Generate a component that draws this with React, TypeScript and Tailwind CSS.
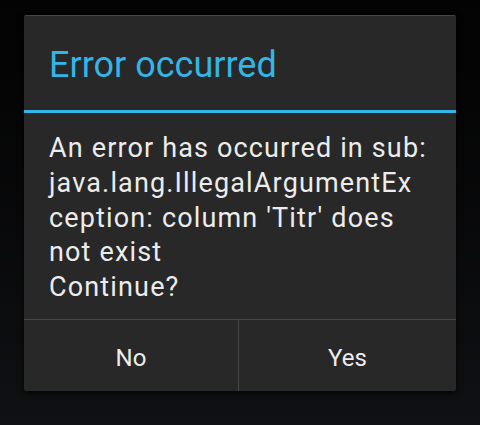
export default function App() {
    const lines = [
        "An error has occurred in sub:",
        "java.lang.IllegalArgumentEx",
        "ception: column 'Titr' does",
        "not exist",
        "Continue?",
    ];

    return (
        <div className="w-[480px] h-[425px] bg-gradient-to-b from-[#030303] to-[#101114] pt-[15px] px-[24px] font-['Roboto',sans-serif]">
            {/* Dialog */}
            <div className="w-[432px] bg-[#282828] rounded-[2px] border-t border-[#454545] shadow-[0_2px_6px_rgba(0,0,0,0.8)]">
                {/* Title */}
                <div className="pl-[25px] pt-[31px] pb-[27px] text-[36px] leading-[36px] text-[#33b5e5]">
                    Error occurred
                </div>
                <div className="h-[3px] bg-[#33b5e5]" />

                {/* Message */}
                <div className="pl-[25px] pt-[18px] pb-[14px] text-[27px] leading-[34.75px] tracking-[1.15px] text-[#ececec]">
                    {lines.map((line) => (
                        <div key={line} className="whitespace-nowrap">
                            {line}
                        </div>
                    ))}
                </div>

                {/* Buttons */}
                <div className="grid grid-cols-[215px_1fr] border-t border-[#474747] h-[72px] text-[24px] text-[#ececec]">
                    <button className="flex items-center justify-center pt-[5px] border-r border-[#474747]">No</button>
                    <button className="flex items-center justify-center pt-[5px]">Yes</button>
                </div>
            </div>
        </div>
    );
}
